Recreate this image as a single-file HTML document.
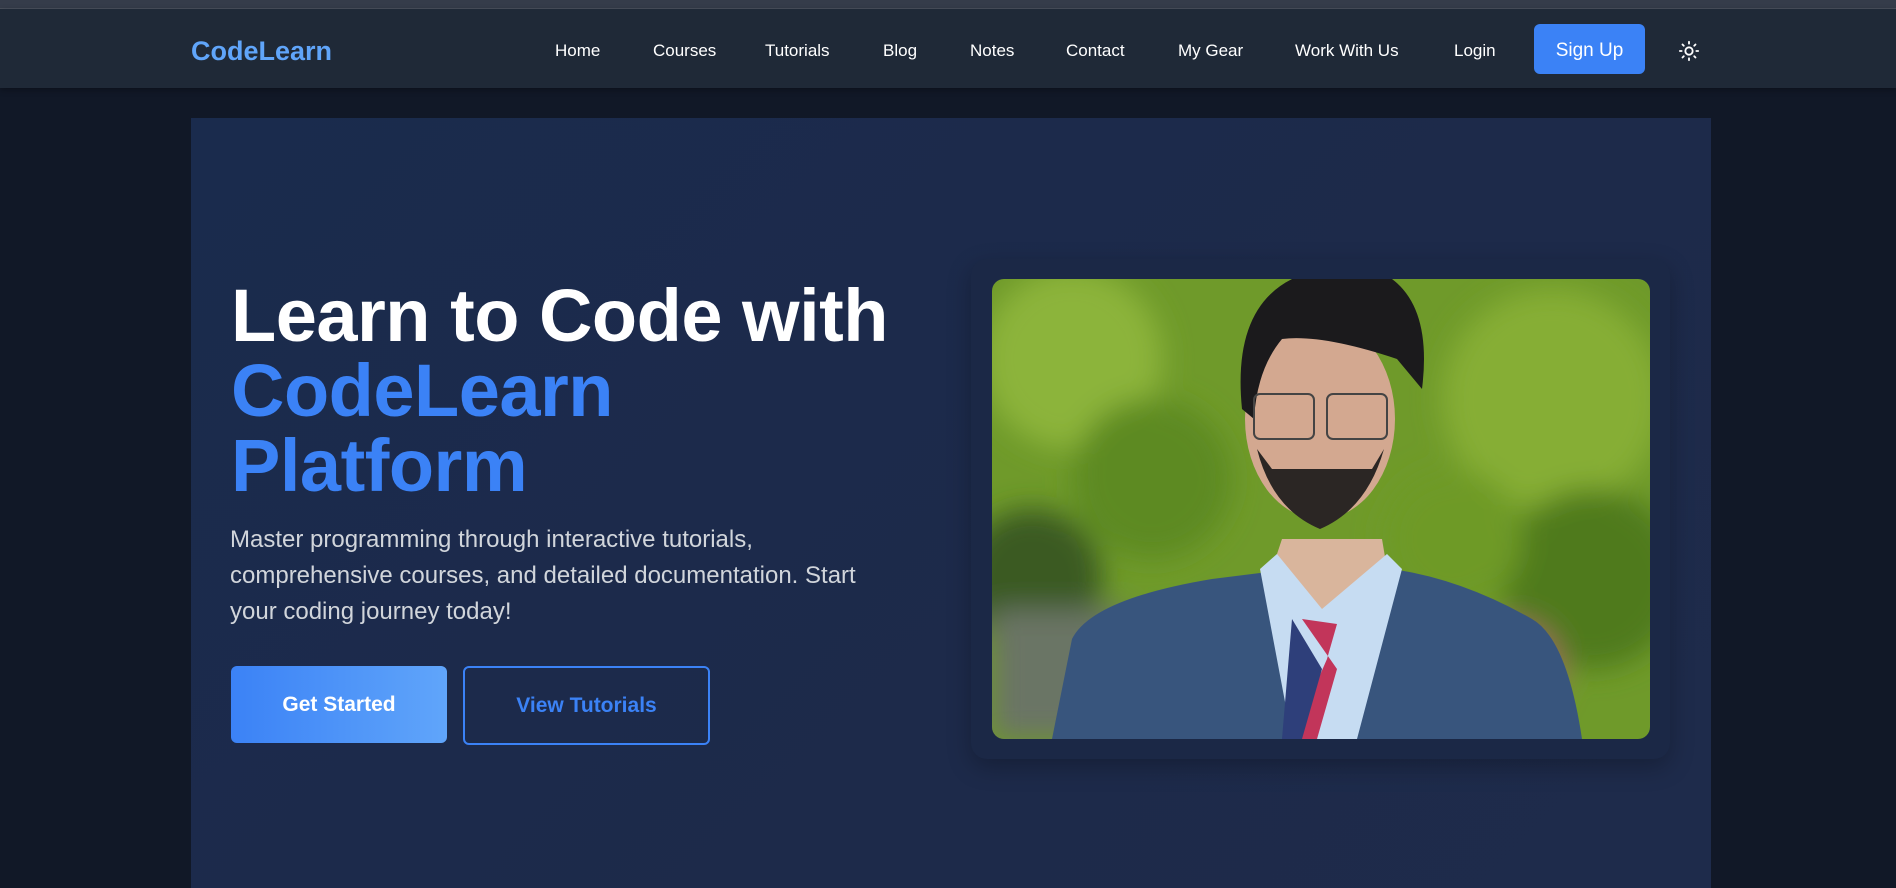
<!DOCTYPE html>
<html><head><meta charset="utf-8"><style>
*{margin:0;padding:0;box-sizing:border-box}
html,body{width:1896px;height:888px;overflow:hidden;background:#111827;font-family:"Liberation Sans",sans-serif}
.strip{position:absolute;left:0;top:0;width:1896px;height:9px;background:#353c4a;border-bottom:1px solid #4a505c}
.nav{position:absolute;left:0;top:9px;width:1896px;height:79px;background:#1f2937;box-shadow:0 2px 6px rgba(0,0,0,.3)}
.logo{position:absolute;left:191px;top:25px;font-size:27px;font-weight:bold;color:#60a5fa;line-height:34px}
.nl{position:absolute;top:31px;font-size:17px;color:#fff;line-height:22px;white-space:nowrap}
.signup{position:absolute;left:1534px;top:15px;width:111px;height:50px;background:#3b82f6;border-radius:6px;color:#fff;font-size:19px;line-height:54px;text-align:center}
.hero{position:absolute;left:191px;top:118px;width:1520px;height:770px;background:linear-gradient(135deg,#1a2b4d,#1d2a4a 60%,#1e2b4b)}
h1{position:absolute;left:231px;top:278px;font-size:74px;line-height:75px;letter-spacing:-0.5px;color:#fff;font-weight:bold}
h1 span{color:#3b82f6}
.p{position:absolute;left:230px;top:522px;width:660px;font-size:24px;line-height:36px;color:#d1d5db}
.b1{position:absolute;left:231px;top:666px;width:216px;height:77px;border-radius:6px;background:linear-gradient(90deg,#3b82f6,#60a5fa);color:#fff;font-size:21px;line-height:77px;text-align:center;font-weight:bold}
.b2{position:absolute;left:463px;top:666px;width:247px;height:79px;border-radius:6px;border:2px solid #3b82f6;color:#3b82f6;font-size:21px;line-height:75px;text-align:center;font-weight:bold}
.frame{position:absolute;left:971px;top:259px;width:699px;height:500px;border-radius:16px;background:#1b2846;box-shadow:0 8px 24px rgba(0,0,0,.25)}
.photo{position:absolute;left:992px;top:279px;width:658px;height:460px;border-radius:12px;overflow:hidden}
</style></head><body>
<div class="strip"></div>
<div class="nav">
<div class="logo">CodeLearn</div>
<div class="nl" style="left:555px">Home</div>
<div class="nl" style="left:653px">Courses</div>
<div class="nl" style="left:765px">Tutorials</div>
<div class="nl" style="left:883px">Blog</div>
<div class="nl" style="left:970px">Notes</div>
<div class="nl" style="left:1066px">Contact</div>
<div class="nl" style="left:1178px">My Gear</div>
<div class="nl" style="left:1295px">Work With Us</div>
<div class="nl" style="left:1454px">Login</div>
<div class="signup">Sign Up</div>
<svg style="position:absolute;left:1678px;top:31px" width="22" height="22" viewBox="0 0 24 24" fill="none" stroke="#fff" stroke-width="2" stroke-linecap="round"><circle cx="12" cy="12" r="4"/><path d="M12 2v2M12 20v2M4.9 4.9l1.4 1.4M17.7 17.7l1.4 1.4M2 12h2M20 12h2M4.9 19.1l1.4-1.4M17.7 6.3l1.4-1.4"/></svg>
</div>
<div class="hero"></div>
<h1>Learn to Code with<br><span>CodeLearn<br>Platform</span></h1>
<div class="p">Master programming through interactive tutorials, comprehensive courses, and detailed documentation. Start your coding journey today!</div>
<div class="b1">Get Started</div>
<div class="b2">View Tutorials</div>
<div class="frame"></div>
<div class="photo">
<svg width="658" height="460" viewBox="0 0 658 460">
<defs><filter id="bl"><feGaussianBlur stdDeviation="14"/></filter></defs>
<rect width="658" height="460" fill="#6f9a2a"/>
<g filter="url(#bl)">
<circle cx="80" cy="80" r="90" fill="#8cb43a"/>
<circle cx="160" cy="200" r="80" fill="#5d8a22"/>
<circle cx="560" cy="120" r="110" fill="#86ae35"/>
<circle cx="600" cy="300" r="90" fill="#4f7a1c"/>
<circle cx="40" cy="300" r="70" fill="#3a5a20"/>
<rect x="0" y="330" width="140" height="130" fill="#6a7565"/>
<circle cx="520" cy="390" r="50" fill="#a06a5a"/>
<circle cx="460" cy="260" r="70" fill="#6e9a28"/>
</g>
<path d="M60 460 L80 360 Q100 320 220 300 L300 290 L400 290 Q470 300 540 340 Q575 360 590 460 Z" fill="#38557d"/>
<path d="M280 290 L330 380 L395 290 L390 260 L290 260 Z" fill="#d9b59c"/>
<path d="M268 290 L300 460 L365 460 L410 290 L395 275 L330 330 L285 275 Z" fill="#c6dcf2"/>
<path d="M310 340 L345 345 L335 380 L300 460 L325 460 L345 390 Z" fill="#c2355a"/>
<path d="M300 340 L330 390 L310 460 L290 460 Z" fill="#2e3f7a"/>
<ellipse cx="328" cy="140" rx="75" ry="100" fill="#d3a890"/>
<path d="M250 130 Q240 30 300 0 L400 0 Q440 30 430 110 L405 80 Q330 55 290 60 Q265 90 262 140 Z" fill="#1b1a1c"/>
<path d="M265 170 Q280 230 328 250 Q375 230 392 170 L380 190 Q330 190 280 190 Z" fill="#2b2624"/>
<rect x="262" y="115" width="60" height="45" rx="6" fill="none" stroke="#444" stroke-width="2"/>
<rect x="335" y="115" width="60" height="45" rx="6" fill="none" stroke="#444" stroke-width="2"/>
</svg>
</div>
</body></html>
